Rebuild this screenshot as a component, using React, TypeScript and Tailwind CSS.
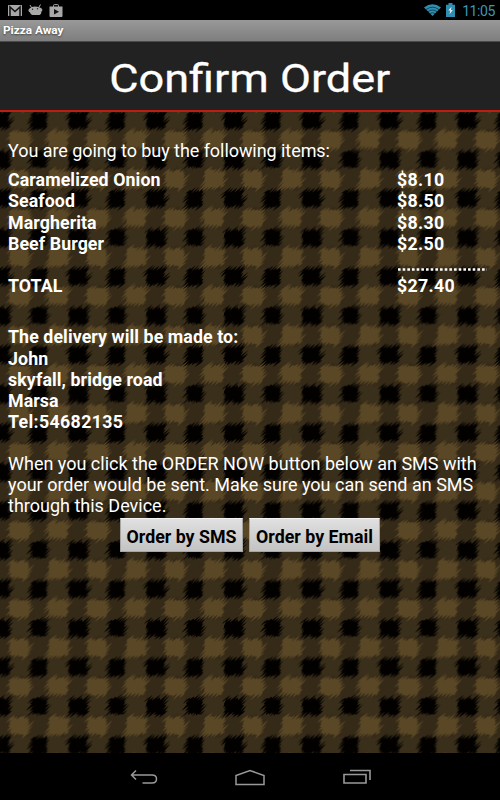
import type { ReactNode } from "react";

const ITEMS = [
  { name: "Caramelized Onion", price: "$8.10" },
  { name: "Seafood", price: "$8.50" },
  { name: "Margherita", price: "$8.30" },
  { name: "Beef Burger", price: "$2.50" },
];

const ADDRESS = ["The delivery will be made to:", "John", "skyfall, bridge road", "Marsa"];

const TILE_W = 77.8;
const TILE_H = 78.1;

// Small seeded generator, so the cloth is the same on every render
function seeded(seed: number) {
  let s = seed;
  return () => {
    s = (s * 16807) % 2147483647;
    return s / 2147483647;
  };
}

// A square patch whose edges are frayed along the "/" diagonal
function patch(cx: number, cy: number, w: number, h: number, seed: number) {
  const rnd = seeded(seed * 7919);
  const pts: string[] = [];
  const add = (x: number, y: number) => pts.push(`${x.toFixed(1)},${y.toFixed(1)}`);
  const l = cx - w / 2, r = cx + w / 2, t = cy - h / 2, b = cy + h / 2;
  const n = 5;
  const edge = (x0: number, y0: number, x1: number, y1: number, dir: number) => {
    for (let i = 0; i < n; i++) {
      const f = (i + rnd() * 0.3) / n, g = (i + 0.35 + rnd() * 0.4) / n;
      const len = (0.5 + rnd() * 6.5) * dir;
      const dip = (rnd() * 3 - 0.5) * dir;
      add(x0 + (x1 - x0) * f - dip, y0 + (y1 - y0) * f + dip);
      add(x0 + (x1 - x0) * g + len * 0.9, y0 + (y1 - y0) * g - len * 0.8);
    }
  };
  edge(l, t, r, t, 1);
  edge(r, t, r, b, 1);
  edge(r, b, l, b, -1);
  edge(l, b, l, t, -1);
  return pts.join(" ");
}

function Plaid() {
  const cells = [0, 1].flatMap((i) => [0, 1].map((j) => ({ i, j, seed: 4321 + i * 917 + j * 5077 })));
  const hw = TILE_W / 2, hh = TILE_H / 2;
  const around = [-1, 0, 1].flatMap((a) => [-1, 0, 1].map((b) => ({ x: a * TILE_W, y: b * TILE_H })));
  return (
    <svg className="col-start-1 row-start-1 h-full w-full" aria-hidden="true">
      <defs>
        <pattern id="plaid" x={19.5} y={-11} width={TILE_W} height={TILE_H} patternUnits="userSpaceOnUse">
          <rect width={TILE_W} height={TILE_H} fill="#352a18" />
          {around.map((o, k) => (
            <g key={k} transform={`translate(${o.x} ${o.y})`}>
              {cells.map(({ i, j, seed }) => (
                <polygon key={seed} points={patch(38.9 + i * hw, 19.5 + j * hh, 18, 16, seed + 99)} fill="#3a2f1a" />
              ))}
            </g>
          ))}
          {around.map((o, k) => (
            <g key={k} transform={`translate(${o.x} ${o.y})`}>
              {cells.map(({ i, j, seed }) => (
                <polygon key={seed} points={patch(38.9 + i * hw, 39 + j * hh, 18.5, 16.5, seed + 31)} fill="#5a4725" />
              ))}
              {cells.map(({ i, j, seed }) => (
                <polygon key={seed} points={patch(19.5 + i * hw, 19.5 + j * hh, i ? 18 : 14.5, 15.5, seed)} fill="#020100" />
              ))}
            </g>
          ))}
        </pattern>
      </defs>
      <rect width="100%" height="100%" fill="url(#plaid)" />
    </svg>
  );
}

function StatusBar() {
  return (
    <div className="flex h-5 items-center justify-between bg-black pl-2 pr-[5px]">
      <div className="flex items-center gap-[6px]">
        <svg width="14" height="11" viewBox="0 0 14 11">
          <rect width="14" height="11" rx="0.5" fill="#a8a8a8" />
          <path d="M2 11V2l5 4.500L12 2v9" fill="none" stroke="#151515" strokeWidth="1.600" />
        </svg>
        <svg width="15" height="12" viewBox="0 0 15 12">
          <path d="M3.500 3.500 2 1M11 3 12.500 0.500" stroke="#a8a8a8" />
          <path d="M1.500 4.500Q3 2.500 7 2.500T13 4Q15.500 6 13.500 7.500 13.500 10 11.500 11H4.500Q2.500 10.500 2 8.500-1 7 1.500 4.500Z" fill="#a8a8a8" />
          <circle cx="4.500" cy="5.200" r="0.700" fill="#222" />
          <circle cx="9.500" cy="4.700" r="0.700" fill="#222" />
        </svg>
        <svg width="14" height="13" viewBox="0 0 14 13">
          <path d="M4.500 3V1.500Q4.500 0.600 5.500 0.600h3q1 0 1 0.900V3" fill="none" stroke="#a8a8a8" />
          <path d="M0.500 2.500h13V12q0 1-1 1h-11q-1 0-1-1Z" fill="#a8a8a8" />
          <path d="M5 5v5.500L10 7.700Z" fill="#111" />
        </svg>
      </div>
      <div className="flex items-center">
        <svg width="17" height="12" viewBox="0 0 17 12">
          <path d="M0 3.500Q8.500-3 17 3.500L8.500 12Z" fill="#2f8fb3" />
          <path d="M2 5.600Q8.500 0.800 15 5.600M4 7.700Q8.500 4.300 13 7.700M6 9.600Q8.500 7.800 11 9.600" fill="none" stroke="#041118" strokeWidth="0.600" />
        </svg>
        <svg className="ml-[5px]" width="9" height="14" viewBox="0 0 9 14">
          <path d="M0 1.800h2.500V0h4v1.800H9V14H0Z" fill="#2f8fb3" />
          <path d="M5.500 3.800 2.300 7.500h2L3.500 11.300 6.800 7H4.800Z" fill="#e6f6fc" />
        </svg>
        <span className="ml-[7px] mt-[2px] text-[14px] leading-none tracking-[-0.4px] text-[#3a97b8]">11:05</span>
      </div>
    </div>
  );
}

function Row({ name, price }: { name: string; price: string }) {
  return (
    <div className="grid grid-cols-[389px_1fr]">
      <span>{name}</span>
      <span className="tracking-[0.3px]">{price}</span>
    </div>
  );
}

function OrderButton({ children, className }: { children: ReactNode; className: string }) {
  return (
    <button className={`h-[34px] whitespace-nowrap border border-[#a5a5a5] border-t-[#f3f3f3] bg-linear-to-b from-[#e0e0e0] to-[#c3c3c3] pt-[3px] text-[17.8px] font-bold leading-none text-black ${className}`}>
      {children}
    </button>
  );
}

function NavBar() {
  return (
    <div className="flex h-[47px] items-center bg-black pt-px">
      <svg className="ml-[130px]" width="28" height="16" viewBox="0 0 28 16" fill="none" stroke="#999" strokeWidth="1.500">
        <path d="M6 1.500 1.500 6 6 10.500M1.500 6H22q4.500 0 4.500 4t-4.500 4H12.500" />
      </svg>
      <svg className="ml-[76px]" width="32" height="17" viewBox="0 0 32 17" fill="none" stroke="#999" strokeWidth="1.500">
        <path d="M2 15.500V6.500L16 1.500l14 5v9Z" />
      </svg>
      <svg className="ml-[76px]" width="30" height="16" viewBox="0 0 30 16" fill="none" stroke="#999" strokeWidth="1.600">
        <path d="M2 5.500h22v8.500H2ZM8 1.500h20v9.500" />
      </svg>
    </div>
  );
}

export default function App() {
  return (
    <div className="flex h-[800px] w-[500px] flex-col overflow-hidden bg-black font-[Roboto,sans-serif] text-white">
      <StatusBar />
      <div className="flex h-[22px] items-center border-b border-[#4a4a4a] bg-linear-to-b from-[#999] to-[#7e7e7e] pl-[3px] text-[11.8px] font-bold [text-shadow:0_1px_2px_#444]">
        Pizza Away
      </div>
      <header className="flex h-[70px] items-center justify-center border-b-2 border-[#c01c12] bg-[#222] pt-[6px]">
        <h1 className="scale-x-[1.155] whitespace-nowrap text-[39px] leading-none [-webkit-text-stroke:0.3px_white]">Confirm Order</h1>
      </header>
      <main className="grid h-[641px] grid-cols-1 grid-rows-1">
        <Plaid />
        <div className="relative col-start-1 row-start-1 pl-2 pt-[28px] text-[18px] leading-[21.25px]">
          <p className="tracking-[-0.06px]">You are going to buy the following items:</p>
          <div className="mt-[7.8px] text-[17.8px] font-bold tracking-[0.08px]">
            {ITEMS.map((item) => (
              <Row key={item.name} {...item} />
            ))}
            <div className="flex h-[21.2px] items-end pb-[4px] pl-[390px]">
              <svg width="89" height="3" aria-hidden="true">
                <path d="M0 1.500H89" stroke="#fff" strokeWidth="2.400" strokeDasharray="2.600 2.070" />
              </svg>
            </div>
            <Row name="TOTAL" price="$27.40" />
          </div>
          <div className="mt-[29.8px] text-[17.8px] font-bold tracking-[0.08px]">
            {ADDRESS.map((line) => (
              <p key={line}>{line}</p>
            ))}
            <p className="tracking-[0.35px]">Tel:54682135</p>
          </div>
          <p className="mt-[20.1px] w-[480px]">
            When you click the ORDER NOW button below an SMS with
            <br />
            your order would be sent. Make sure you can send an SMS
            <br />
            through this Device.
          </p>
          <div className="mt-[1.8px] flex gap-[6px] pl-[112px]">
            <OrderButton className="w-[123px]">Order by SMS</OrderButton>
            <OrderButton className="w-[131px]">Order by Email</OrderButton>
          </div>
        </div>
      </main>
      <NavBar />
    </div>
  );
}
